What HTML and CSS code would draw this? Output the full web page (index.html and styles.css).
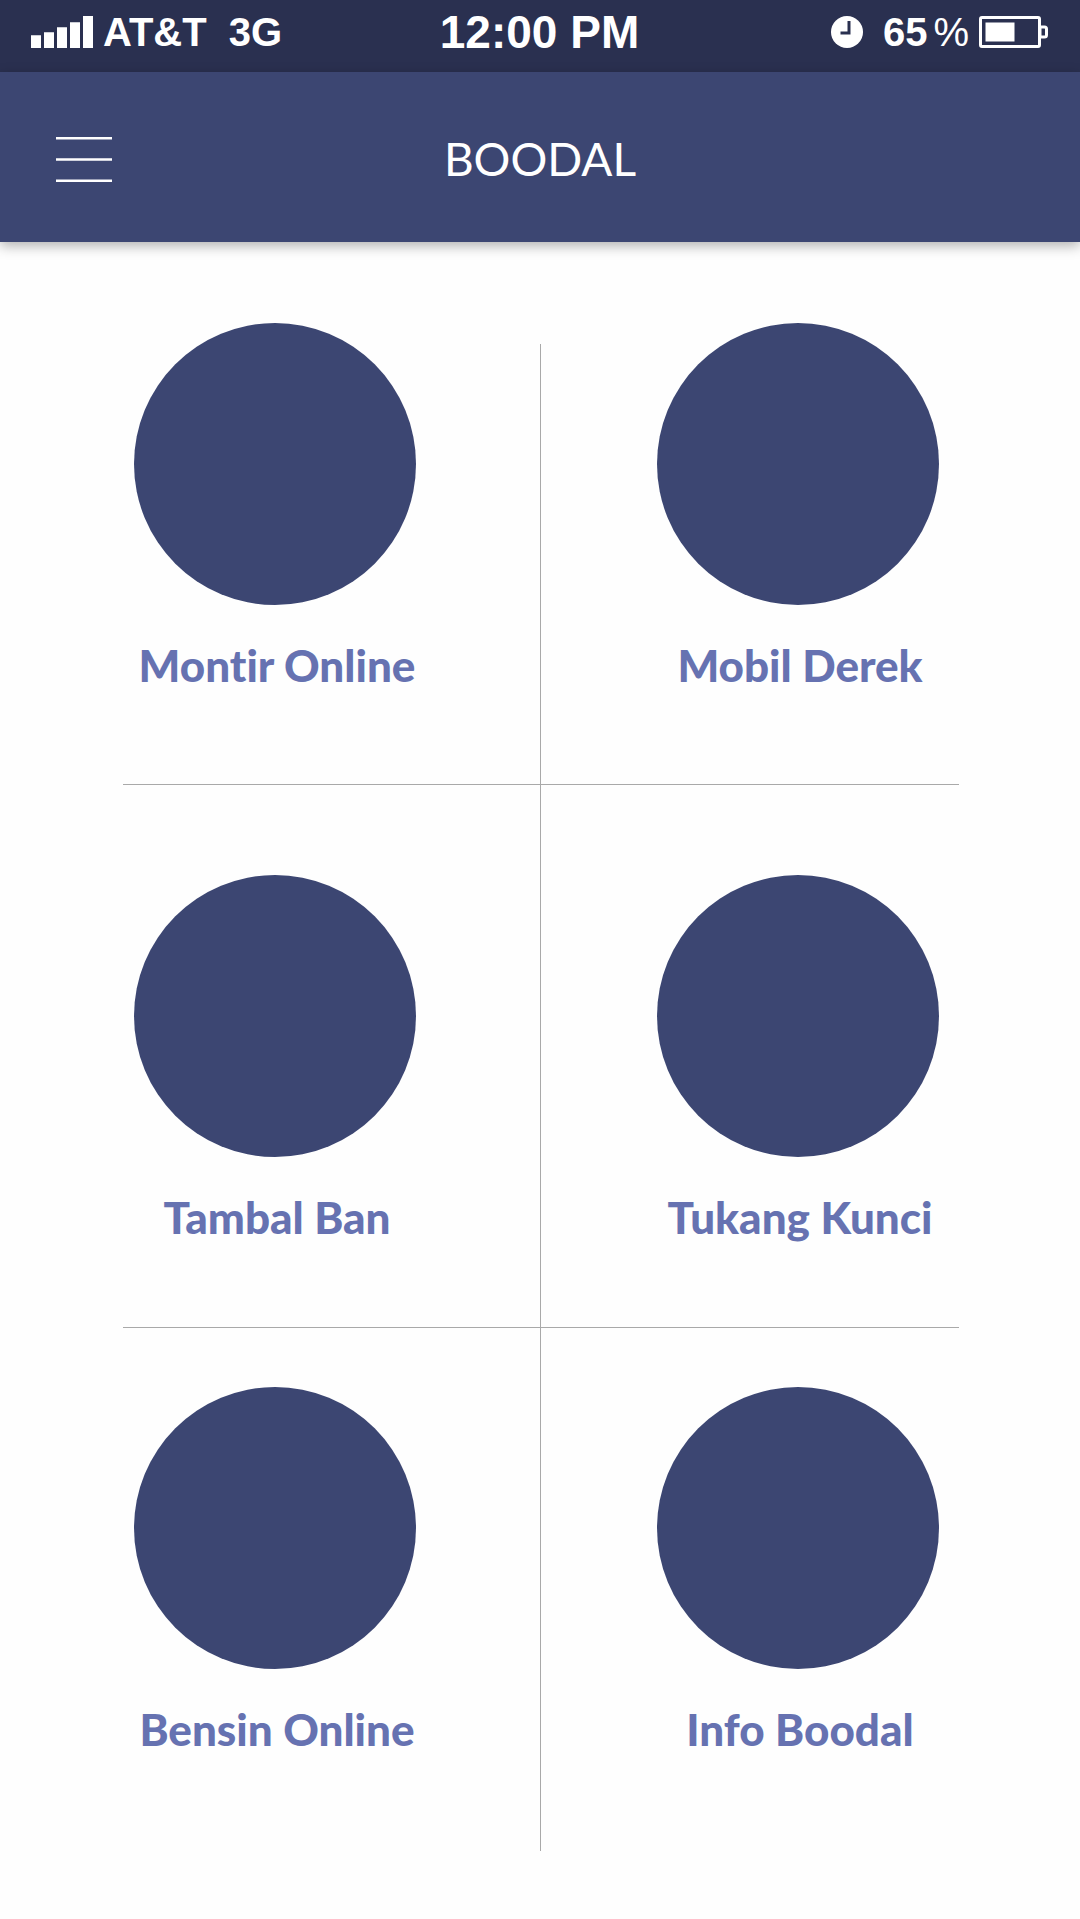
FILE: index.html
```html
<!DOCTYPE html>
<html lang="id">
<head>
<meta charset="utf-8">
<meta name="viewport" content="width=device-width, initial-scale=1">
<title>Boodal</title>
<link rel="stylesheet" href="styles.css">
</head>
<body>
<div class="status">
  <div class="status-group">
    <svg class="icon" width="62" height="32" viewBox="0 0 62 32" fill="#fff" aria-hidden="true">
      <path d="M0 19.3h10V32H0zM13 16.3h10V32H13zM26 11.2h10V32H26zM39 6.3h10V32H39zM52 0h10v32H52z"/>
    </svg>
    <span class="carrier">AT&amp;T</span>
    <span class="network">3G</span>
  </div>
  <time class="clock-time">12:00 PM</time>
  <div class="status-group status-end">
    <svg class="icon" width="32" height="32" viewBox="0 0 32 32" aria-hidden="true">
      <circle cx="16" cy="16" r="16" fill="#fff"/>
      <path d="M18 5v12H9.500" fill="none" stroke="#2a3050" stroke-width="3"/>
    </svg>
    <span class="charge">65<span class="percent">%</span></span>
    <svg class="icon" width="69" height="32" viewBox="0 0 69 32" aria-hidden="true">
      <rect x="1.500" y="1.500" width="59" height="29" rx="1.500" fill="none" stroke="#fff" stroke-width="3"/>
      <rect x="6.500" y="6.500" width="29" height="19" fill="#fff"/>
      <path d="M61 11h4.500q2 0 2 2v6q0 2-2 2H61z" fill="none" stroke="#fff" stroke-width="3"/>
    </svg>
  </div>
</div>
<header class="topbar">
  <button class="menu" type="button" aria-label="Menu">
    <svg width="56" height="45" viewBox="0 0 56 45" fill="#fff" aria-hidden="true">
      <path d="M0 0h56v2.600H0zM0 21.200h56v2.600H0zM0 42.400h56V45H0z"/>
    </svg>
  </button>
  <h1 class="title">BOODAL</h1>
</header>
<main class="main">
  <nav class="services">
    <div class="row">
      <a class="service" href="#montir"><span class="disc"></span><span class="label">Montir Online</span></a>
      <a class="service" href="#derek"><span class="disc"></span><span class="label">Mobil Derek</span></a>
    </div>
    <div class="row row-middle">
      <a class="service" href="#ban"><span class="disc"></span><span class="label">Tambal Ban</span></a>
      <a class="service" href="#kunci"><span class="disc"></span><span class="label">Tukang Kunci</span></a>
    </div>
    <div class="row row-last">
      <a class="service" href="#bensin"><span class="disc"></span><span class="label">Bensin Online</span></a>
      <a class="service" href="#info"><span class="disc"></span><span class="label">Info Boodal</span></a>
    </div>
  </nav>
</main>
</body>
</html>
```
FILE: styles.css
```css
* {
  box-sizing: border-box;
}

body {
  margin: 0;
  background: #fefefe;
  font-family: Lato, "Open Sans", sans-serif;
}

.status {
  display: grid;
  grid-template-columns: 1fr auto 1fr;
  align-items: center;
  padding: 0 32px 8px 31px;
  height: 72px;
  background: #2a3050;
  color: #fff;
  font: bold 40px/64px "Liberation Sans", Arial, sans-serif;
  white-space: nowrap;
}

.status-group {
  display: flex;
  align-items: center;
}

.status-end {
  justify-content: flex-end;
}

.icon {
  display: block;
  flex: none;
}

.carrier {
  margin-left: 10px;
}

.network {
  margin-left: 22px;
}

.clock-time {
  font-size: 46px;
}

.charge {
  margin: 0 10px 0 20px;
}

.percent {
  margin-left: 6px;
  font-weight: normal;
}

.topbar {
  display: grid;
  grid-template-columns: 1fr auto 1fr;
  align-items: center;
  height: 170px;
  padding: 4px 56px 0;
  background: #3c4672;
  color: #fff;
  box-shadow: 0 4px 12px rgba(0, 0, 0, 0.3);
}

.menu {
  justify-self: start;
  padding: 0;
  border: 0;
  background: none;
}

.menu svg {
  display: block;
}

.title {
  margin: 0;
  font-size: 46px;
  font-weight: 400;
  line-height: 56px;
}

.main {
  padding: 0 121px 68px 123px;
}

.services {
  position: relative;
}

/* Vertical divider crossing all the rows */
.services::after {
  content: "";
  position: absolute;
  top: 102px;
  bottom: 0;
  left: 50%;
  width: 1px;
  margin-left: -1px;
  background: #a9a9a9;
}

.row {
  display: flex;
  justify-content: space-between;
  padding: 81px 20px 91px 11px;
  border-bottom: 1px solid #a9a9a9;
}

.row-middle {
  padding-top: 90px;
  padding-bottom: 82px;
}

.row-last {
  padding-top: 59px;
  padding-bottom: 94px;
  border-bottom: 0;
}

.service {
  display: flex;
  flex-direction: column;
  align-items: center;
  gap: 32px;
  width: 282px;
  color: #6672b1;
  text-decoration: none;
}

.disc {
  width: 282px;
  height: 282px;
  border-radius: 50%;
  background: #3c4672;
}

.label {
  padding-left: 4px;
  font-size: 44px;
  font-weight: 900;
  font-variant-ligatures: none;
  line-height: 56px;
  white-space: nowrap;
}
```
